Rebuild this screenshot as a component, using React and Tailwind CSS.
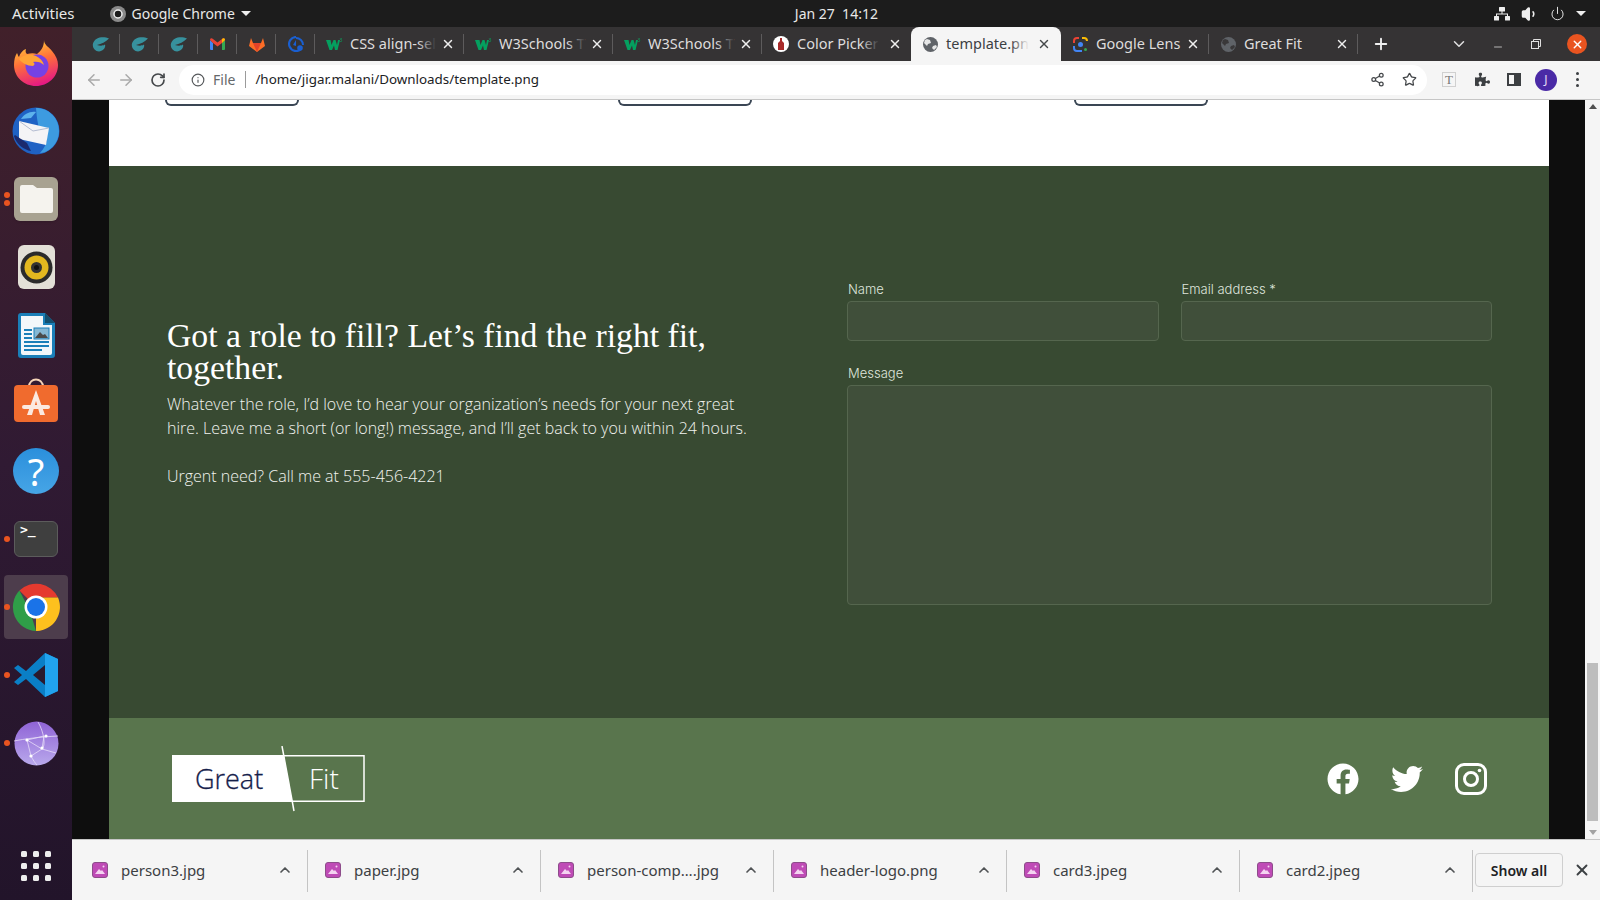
import { ArrowLeft, ArrowRight, RotateCw, Info, Share2, Star, X, ChevronDown, ChevronUp, Plus, Minus, Power, Volume1 } from 'lucide-react';
import { FaFacebook, FaTwitter, FaPuzzlePiece } from 'react-icons/fa';

const uiFont = { fontFamily: '"Noto Sans", sans-serif' };

/* ---------- dock icons ---------- */

const FirefoxIcon = () => (
  <svg width="48" height="48" viewBox="0 0 48 48">
    <defs>
      <linearGradient id="ff" x1="0.3" y1="0" x2="0.6" y2="1">
        <stop offset="0" stopColor="#ffd43a" />
        <stop offset="0.45" stopColor="#ff7139" />
        <stop offset="1" stopColor="#e31587" />
      </linearGradient>
    </defs>
    <path d="M32 1c0 5 5 7 8 11 4 5 6 9 6 14 0 12-10 21-22 21S2 38 2 26c0-5 1-9 3-12 1 2 1 3 2 4 1-4 4-7 7-8-1 3 0 4 1 5 4-1 7-1 10 0 4-3 7-7 7-14z" fill="url(#ff)" />
    <circle cx="25" cy="27" r="11.5" fill="#7542e5" />
    <path d="M7 20c5-5 12-5 17-3 4 2 7 5 8 9-3-3-7-4-11-3 2 1 2 3 0 4-6 0-11-3-14-7z" fill="#ffa436" />
  </svg>
);

const ThunderbirdIcon = () => (
  <svg width="50" height="50" viewBox="0 0 50 50">
    <circle cx="25" cy="25" r="23.5" fill="#1f62c4" />
    <path d="M25 2c13 0 23 10 23 23 0 8-4 15-10 19-3 2-6 3-9 3 4-4 6-9 7-13-8-3-10-20-11-32z" fill="#3d9be0" />
    <path d="M8 15l30 7-3 17-27-6z" fill="#f4f4f6" />
    <path d="M8 15l14 10 16-3" fill="none" stroke="#b4bdd2" strokeWidth="1" />
    <path d="M3 30c2 8 10 14 17 15l-4-8-12-8z" fill="#1b2a6e" />
    <path d="M10 13c3-5 9-8 15-7l-5 6-10 1z" fill="#5db3ec" />
  </svg>
);

const FilesIcon = () => (
  <div className="flex h-[44px] w-[44px] items-center justify-center rounded-md bg-[#a8a291] shadow-sm">
    <svg width="33" height="28" viewBox="0 0 33 28">
      <path d="M2 0h11l4 3h14a2 2 0 0 1 2 2v21a2 2 0 0 1-2 2H2a2 2 0 0 1-2-2V2a2 2 0 0 1 2-2z" fill="#f5f3ee" />
    </svg>
  </div>
);

const RhythmboxIcon = () => (
  <div className="flex h-[44px] w-[37px] items-center justify-center rounded-md bg-[#e3e0d7]">
    <svg width="33" height="33" viewBox="0 0 33 33">
      <circle cx="16.5" cy="16.5" r="16" fill="#2b2b2b" />
      <circle cx="16.5" cy="16.5" r="12" fill="#e3b81f" />
      <circle cx="16.5" cy="16.5" r="5.5" fill="#333" />
      <circle cx="16.5" cy="16.5" r="2.5" fill="#111" />
    </svg>
  </div>
);

const WriterIcon = () => (
  <svg width="37" height="45" viewBox="0 0 37 45">
    <path d="M3 0h24l10 10v32a3 3 0 0 1-3 3H3a3 3 0 0 1-3-3V3a3 3 0 0 1 3-3z" fill="#1a7fb8" />
    <path d="M3 3h22v9h9v28a2 2 0 0 1-2 2H5a2 2 0 0 1-2-2z" fill="#f2f7fa" />
    <path d="M27 0l10 10H27z" fill="#14506f" />
    <g fill="#1a7fb8">
      <rect x="6" y="16" width="8" height="2" />
      <rect x="6" y="20" width="8" height="2" />
      <rect x="6" y="24" width="8" height="2" />
      <rect x="6" y="28" width="25" height="2" />
      <rect x="6" y="32" width="25" height="2" />
      <rect x="6" y="36" width="18" height="2" />
    </g>
    <rect x="16" y="15" width="15" height="11" fill="#86b8d4" stroke="#1a7fb8" />
    <path d="M17 25l5-6 3 3 2-1 3 4z" fill="#4b4b4b" />
  </svg>
);

const SoftwareIcon = () => (
  <svg width="46" height="46" viewBox="0 0 46 46" className="mb-[4px]">
    <path d="M16 9c0-10 14-10 14 0" fill="none" stroke="#f5d4b8" strokeWidth="2" />
    <rect x="1" y="7" width="44" height="37" rx="4" fill="#f06b2e" />
    <path d="M23 12l-9 25h5l4-14 4 14h5z" fill="#fbe9e0" />
    <rect x="9" y="27" width="28" height="4" rx="2" fill="#fbe9e0" />
  </svg>
);

const HelpIcon = () => (
  <div className="flex h-[46px] w-[46px] items-center justify-center rounded-full bg-gradient-to-b from-[#2a8fdc] to-[#46a5e6] text-[38px] leading-none text-white" style={uiFont}>?</div>
);

const TerminalIcon = () => (
  <div className="flex h-[36px] w-[44px] flex-col rounded-md border border-[#5c5c5c] bg-[#3f3f3f] pl-[5px] pt-px text-[13px] font-bold leading-[14px] text-white" style={{ fontFamily: '"DejaVu Sans Mono", monospace' }}>
    &gt;_
  </div>
);

const ChromeIcon = ({ size = 48 }) => (
  <svg width={size} height={size} viewBox="0 0 48 48">
    <path d="M24 24L7.4 7.6A24 24 0 0 1 46 14.5H24z" fill="#e53a2f" />
    <path d="M24 24H46A24 24 0 0 1 24 48z" fill="#fdc01e" />
    <path d="M24 48A24 24 0 0 1 7.4 7.6L18 28z" fill="#2f9e48" />
    <path d="M24 14.5h22a24 24 0 0 1-22 33.5l10-18z" fill="#fdc01e" />
    <circle cx="24" cy="24" r="11.5" fill="#fff" />
    <circle cx="24" cy="24" r="9" fill="#1a73e8" />
  </svg>
);

const VSCodeIcon = () => (
  <svg width="44" height="44" viewBox="0 0 44 44">
    <path d="M31 0l13 6v32l-13 6L12 26l-8 6-4-3 8-7-8-7 4-3 8 6z" fill="#0a7fc6" />
    <path d="M31 0l13 6v32l-13 6z" fill="#21a3ee" />
    <path d="M31 12L19 22l12 10z" fill="#2a1a2e" />
  </svg>
);

const GlobeIcon = () => (
  <svg width="45" height="45" viewBox="0 0 45 45">
    <defs>
      <linearGradient id="gl" x1="0" y1="0" x2="0" y2="1">
        <stop offset="0" stopColor="#8f63d6" />
        <stop offset="1" stopColor="#b9a9ec" />
      </linearGradient>
    </defs>
    <circle cx="22.5" cy="22.5" r="22" fill="url(#gl)" />
    <g fill="none" stroke="#e6dcf8" strokeWidth="0.8">
      <path d="M0 20c10-2 25-4 44-5M13 19l17-4M13 19l15 9M28 28l-11 7M28 28l14 4M13 19l4 16M30 15l-2 13M17 35c2 4 4 7 6 9M24 1c6 10 8 24 4 27" />
    </g>
    <g fill="#fff">
      <circle cx="13" cy="19" r="1.6" />
      <circle cx="32" cy="15" r="1.6" />
      <circle cx="28" cy="27" r="1.6" />
      <circle cx="17" cy="35" r="1.6" />
    </g>
  </svg>
);

/* ---------- tab favicons ---------- */

const SwirlIcon = () => (
  <svg width="17" height="15" viewBox="0 0 17 15">
    <path d="M17 1.500C12-1 3-.5 1 6.500c-1 4 2 8 6 8 4-.5 7-3.500 6-7-2 1.500-5 1.500-8 .5 4-1 9-3 12-6.500z" fill="#37919d" />
  </svg>
);
const GmailIcon = () => (
  <svg width="15" height="12" viewBox="0 0 15 12">
    <path d="M0 2v9a1 1 0 0 0 1 1h2V5z" fill="#4285f4" />
    <path d="M15 2v9a1 1 0 0 1-1 1h-2V5z" fill="#34a853" />
    <path d="M0 2c0-2 2-2 3-1l4.500 3.500L12 1c1-1 3-1 3 1l-3 3-4.500 3.500L3 5z" fill="#ea4335" />
    <path d="M12 1c1-1 3-1 3 1l-3 3z" fill="#fbbc04" />
  </svg>
);
const GitlabIcon = () => (
  <svg width="16" height="15" viewBox="0 0 16 15">
    <path d="M8 15L0 9l2-8 2 5h8l2-5 2 8z" fill="#fc6d26" />
    <path d="M8 15L4 6h8z" fill="#e24329" />
  </svg>
);
const BlueIcon = () => (
  <svg width="16" height="16" viewBox="0 0 16 16">
    <path d="M8 1a7 7 0 1 0 5 12" fill="none" stroke="#1a5fd0" strokeWidth="2.200" />
    <path d="M8 2a7 7 0 0 1 7 7" fill="none" stroke="#1a5fd0" strokeWidth="2" />
    <circle cx="12" cy="12" r="2.800" fill="#1a5fd0" />
    <path d="M8 4L5 9l3 1z" fill="#1a5fd0" />
  </svg>
);
const W3Icon = () => (
  <svg width="17" height="13" viewBox="0 0 17 13">
    <path d="M0 2h4.500l1 5 2-5h2l1.500 5 1-5H14l-2.500 10H9L8 7.500 6 12H3.500z" fill="#04a05f" />
    <text x="13.500" y="4" fontSize="5" fill="#04a05f" style={uiFont}>3</text>
  </svg>
);
const PickerIcon = () => (
  <svg width="16" height="16" viewBox="0 0 16 16">
    <circle cx="8" cy="8" r="8" fill="#fff" />
    <path d="M7 2h2v3l2 2v7H5V7l2-2z" fill="#a82a2a" />
  </svg>
);
const WebIcon = ({ color, land }) => (
  <svg width="15" height="15" viewBox="0 0 15 15">
    <circle cx="7.500" cy="7.500" r="7.500" fill={color} />
    <path d="M4 2l3 1 1 3-3 1-1 2-2-2-1-1 1-3zM10 9l3-1 1 2-3 3-2-2z" fill={land} opacity="0.9" />
  </svg>
);
const LensIcon = () => (
  <svg width="15" height="15" viewBox="0 0 15 15" fill="none" strokeWidth="2">
    <path d="M1 6V4a3 3 0 0 1 3-3h2" stroke="#ea4335" />
    <path d="M9 1h2a3 3 0 0 1 3 3" stroke="#fbbc04" />
    <path d="M1 9v2a3 3 0 0 0 3 3h5" stroke="#4285f4" />
    <circle cx="7.500" cy="7.500" r="2.500" fill="#4285f4" stroke="none" />
    <circle cx="12.500" cy="12.500" r="1.500" fill="#34a853" stroke="none" />
  </svg>
);

const ImageFileIcon = () => (
  <svg width="16" height="16" viewBox="0 0 16 16">
    <rect x="0.500" y="0.500" width="15" height="15" rx="2.500" fill="#bf4bb6" stroke="#8d4d8a" />
    <path d="M3 12l4-5 2 2 1-1 3 4z" fill="#f4d4f1" />
    <circle cx="11.500" cy="4.500" r="1" fill="#f4d4f1" />
  </svg>
);

/* ---------- chrome pieces ---------- */

const IconTab = ({ children }) => (
  <div className="relative flex h-[34px] w-[39px] shrink-0 items-center justify-center">
    {children}
    <span className="absolute right-0 top-[7px] h-[20px] w-px bg-[#5d5b5c]" />
  </div>
);

const Tab = ({ icon, title, width = 'w-[149px]', sep = true, fade = true }) => (
  <div className={`relative flex h-[34px] shrink-0 items-center pl-[10px] text-[14.500px] text-[#dedcdc] ${width}`}>
    <span className="flex w-[18px] shrink-0 justify-center">{icon}</span>
    <span className="relative ml-[7px] whitespace-nowrap">
      {title}
      {fade && <span className="absolute inset-y-0 right-0 w-[18px] bg-gradient-to-r from-transparent to-[#353334]" />}
    </span>
    <X size={14} strokeWidth={2.5} className="absolute right-[9px] top-[10px] text-[#eeeeee]" />
    {sep && <span className="absolute right-0 top-[7px] h-[20px] w-px bg-[#5d5b5c]" />}
  </div>
);

const DockSlot = ({ children, dots = 0, active = false }) => (
  <div className="relative flex h-[68px] w-full shrink-0 items-center justify-center">
    <div className={`flex h-[64px] w-[64px] items-center justify-center rounded ${active ? 'bg-[#4d3d4c]' : ''}`}>{children}</div>
    {dots > 0 && (
      <div className="absolute left-[4px] top-0 flex h-full flex-col justify-center gap-[2px]">
        {Array.from({ length: dots }).map((_, i) => (
          <span key={i} className="h-[6px] w-[6px] rounded-full bg-[#e95420]" />
        ))}
      </div>
    )}
  </div>
);

const Download = ({ name }) => (
  <div className="relative flex h-full w-[233px] shrink-0 items-center pl-[17px] text-[15px] text-[#3c4043]">
    <ImageFileIcon />
    <span className="ml-[13px] whitespace-nowrap">{name}</span>
    <ChevronUp size={16} strokeWidth={2.5} className="absolute right-[15px] top-[22px] text-[#505355]" />
    <span className="absolute bottom-[8px] right-0 top-[10px] w-px bg-[#c4c4c4]" />
  </div>
);

const Field = ({ label, children, className = '' }) => (
  <div className={className}>
    <label className="block h-[20px] pl-px text-[13px] font-light leading-[16px] text-[#dfe5dc]" style={{ fontFamily: 'Inter, sans-serif' }}>{label}</label>
    {children}
  </div>
);

const GreatFitLogo = () => (
  <svg width="197" height="66" viewBox="0 0 197 66">
    <path d="M114 9.750H194V55.250H122" fill="none" stroke="#fff" strokeWidth="1.500" />
    <path d="M2 9h111.700l8.600 47H2z" fill="#fff" />
    <path d="M112 0l12 65" stroke="#fff" strokeWidth="1.500" />
    <text x="25" y="43" fontSize="27" fill="#14204a" style={{ fontFamily: '"Open Sans", sans-serif', fontWeight: 300, stroke: '#14204a', strokeWidth: 0.3 }}>Great</text>
    <text x="139" y="43" fontSize="28" fontWeight="300" fill="#fff" style={{ fontFamily: '"Open Sans", sans-serif' }}>Fit</text>
  </svg>
);

const InstagramIcon = () => (
  <svg width="32" height="32" viewBox="0 0 32 32" fill="none" stroke="#fff" strokeWidth="3">
    <rect x="1.500" y="1.500" width="29" height="29" rx="7.500" />
    <circle cx="16" cy="16" r="6.500" />
    <circle cx="24.500" cy="7.500" r="1.800" fill="#fff" stroke="none" />
  </svg>
);

export default function App() {
  return (
    <div className="flex h-[900px] w-[1600px] flex-col overflow-hidden bg-[#0e0e0e]" style={uiFont}>
      {/* Ubuntu top bar */}
      <div className="relative flex h-[27px] shrink-0 items-center bg-[#1c1c1c] pl-[12px] text-[14px] text-[#e8e8e8]">
        <span className="text-[15px]">Activities</span>
        <div className="ml-[35px] flex items-center">
          <svg width="16" height="16" viewBox="0 0 16 16">
            <circle cx="8" cy="8" r="8" fill="#8a8a8a" />
            <circle cx="8" cy="8" r="4" fill="#1c1c1c" stroke="#eee" strokeWidth="1.500" />
          </svg>
          <span className="ml-[6px]">Google Chrome</span>
          <span className="ml-[6px] h-0 w-0 border-x-[5px] border-t-[5px] border-x-transparent border-t-[#eeeeee]" />
        </div>
        <span className="ml-[544px] whitespace-pre text-[14px]">Jan 27  14:12</span>
        <div className="ml-auto flex items-center gap-[11px] pr-[14px]">
          <svg width="16" height="14" viewBox="0 0 16 14" fill="#eeeeee">
            <rect x="5" y="0" width="6" height="4.500" rx="0.500" />
            <rect x="0" y="9" width="5" height="4.500" rx="0.500" />
            <rect x="11" y="9" width="5" height="4.500" rx="0.500" />
            <path d="M7.500 4h1v2.500h5.500V9h-1V7.500H3V9H2V6.500h5.500z" />
          </svg>
          <Volume1 size={18} className="text-[#eeeeee]" fill="#eeeeee" />
          <Power size={15} strokeWidth={1.500} className="text-[#eeeeee]" />
          <span className="h-0 w-0 border-x-[5px] border-t-[5px] border-x-transparent border-t-[#eeeeee]" />
        </div>
      </div>

      <div className="flex min-h-0 flex-1">
        {/* Dock */}
        <div className="flex w-[72px] shrink-0 flex-col bg-gradient-to-b from-[#41202a] via-[#301a33] to-[#22142a] pt-[2px]">
          <DockSlot><FirefoxIcon /></DockSlot>
          <DockSlot><ThunderbirdIcon /></DockSlot>
          <DockSlot dots={2}><FilesIcon /></DockSlot>
          <DockSlot><RhythmboxIcon /></DockSlot>
          <DockSlot><WriterIcon /></DockSlot>
          <DockSlot><SoftwareIcon /></DockSlot>
          <DockSlot><HelpIcon /></DockSlot>
          <DockSlot dots={1}><TerminalIcon /></DockSlot>
          <DockSlot dots={1} active><ChromeIcon /></DockSlot>
          <DockSlot dots={1}><VSCodeIcon /></DockSlot>
          <DockSlot dots={1}><GlobeIcon /></DockSlot>
          <div className="mb-[19px] mt-auto grid w-[30px] grid-cols-3 gap-[6px] self-center">
            {Array.from({ length: 9 }).map((_, i) => (
              <span key={i} className="h-[6px] w-[6px] rounded-[1.500px] bg-[#eeeeee]" />
            ))}
          </div>
        </div>

        <div className="flex min-w-0 flex-1 flex-col">
          {/* Tab strip */}
          <div className="flex h-[34px] shrink-0 items-center bg-[#353334] pl-[9px]">
            <IconTab><SwirlIcon /></IconTab>
            <IconTab><SwirlIcon /></IconTab>
            <IconTab><SwirlIcon /></IconTab>
            <IconTab><GmailIcon /></IconTab>
            <IconTab><GitlabIcon /></IconTab>
            <IconTab><BlueIcon /></IconTab>
            <Tab icon={<W3Icon />} title="CSS align-sel" />
            <Tab icon={<W3Icon />} title="W3Schools T" />
            <Tab icon={<W3Icon />} title="W3Schools T" />
            <Tab icon={<PickerIcon />} title="Color Picker" sep={false} />
            <div className="relative flex h-[34px] w-[150px] shrink-0 items-center rounded-t-lg bg-[#f5f5f5] pl-[10px] text-[14.500px] text-[#3c4043]">
              <span className="flex w-[18px] shrink-0 justify-center"><WebIcon color="#5f6368" land="#f5f5f5" /></span>
              <span className="relative ml-[7px] whitespace-nowrap">
                template.pn
                <span className="absolute inset-y-0 right-0 w-[18px] bg-gradient-to-r from-transparent to-[#f5f5f5]" />
              </span>
              <X size={14} strokeWidth={2.5} className="absolute right-[10px] top-[10px] text-[#45484a]" />
            </div>
            <Tab icon={<LensIcon />} title="Google Lens" width="w-[148px]" fade={false} />
            <Tab icon={<WebIcon color="#5f6368" land="#353334" />} title="Great Fit" fade={false} />
            <Plus size={18} strokeWidth={2.5} className="ml-[14px] text-[#f0f0f0]" />
            <ChevronDown size={18} strokeWidth={2} className="ml-[60px] text-[#e0e0e0]" />
            <Minus size={12} strokeWidth={1.500} className="ml-[24px] mt-[6px] text-[#e0e0e0]" />
            <svg width="10" height="10" viewBox="0 0 10 10" fill="none" stroke="#e0e0e0" className="ml-[27px]">
              <rect x="0.500" y="2.500" width="7" height="7" />
              <path d="M2.500 2.500v-2h7v7h-2" />
            </svg>
            <div className="ml-[26px] flex h-[20px] w-[20px] items-center justify-center rounded-full bg-[#e95420]">
              <X size={13} strokeWidth={2.5} className="text-white" />
            </div>
          </div>

          {/* Toolbar */}
          <div className="flex h-[39px] shrink-0 items-center border-b border-[#c6c6c6] bg-[#f5f5f5] pb-px">
            <ArrowLeft size={18} className="ml-[13px] text-[#a9a9a9]" />
            <ArrowRight size={18} className="ml-[14px] text-[#a9a9a9]" />
            <RotateCw size={16} strokeWidth={2.5} className="ml-[15px] text-[#44474a]" />
            <div className="ml-[13px] flex h-[30px] w-[1248px] items-center rounded-full bg-white pl-[12px] text-[14px] text-[#202124]">
              <Info size={14} className="text-[#55585b]" />
              <span className="ml-[8px] text-[#65686b]">File</span>
              <span className="ml-[10px] h-[17px] w-px bg-[#9b9b9b]" />
              <span className="ml-[9px] whitespace-nowrap text-[13.400px]">/home/jigar.malani/Downloads/template.png</span>
              <Share2 size={15} className="ml-auto text-[#44474a]" />
              <Star size={15} strokeWidth={2} className="ml-[17px] mr-[10px] text-[#44474a]" />
            </div>
            <div className="ml-[15px] flex h-[15px] w-[14px] items-center justify-center border border-[#d0d0d0] text-[13px] leading-none text-[#777]" style={{ fontFamily: '"Liberation Serif", serif' }}>T</div>
            <FaPuzzlePiece size={15} className="ml-[19px] text-[#3c3f42]" />
            <div className="ml-[17px] flex h-[13px] w-[14px] justify-end border-2 border-[#3c3f42]"><span className="w-[5px] bg-[#3c3f42]" /></div>
            <div className="ml-[14px] flex h-[22px] w-[22px] items-center justify-center rounded-full bg-[#4a2aa6] text-[12px] text-[#e6dcf8]">J</div>
            <div className="ml-[19px] flex flex-col gap-[3px]">
              <span className="h-[3px] w-[3px] rounded-full bg-[#3c3f42]" />
              <span className="h-[3px] w-[3px] rounded-full bg-[#3c3f42]" />
              <span className="h-[3px] w-[3px] rounded-full bg-[#3c3f42]" />
            </div>
          </div>

          {/* Viewport */}
          <div className="flex min-h-0 flex-1 bg-[#0e0e0e] pl-[37px]">
            <div className="flex w-[1440px] shrink-0 flex-col">
              {/* tail of the cards above */}
              <div className="flex h-[66px] shrink-0 bg-white pl-[56px]">
                <div className="w-[453px]"><div className="h-[6px] w-[134px] rounded-b-lg border-x-2 border-b-2 border-[#3a4654]" /></div>
                <div className="w-[456px]"><div className="h-[6px] w-[134px] rounded-b-lg border-x-2 border-b-2 border-[#3a4654]" /></div>
                <div><div className="h-[6px] w-[134px] rounded-b-lg border-x-2 border-b-2 border-[#3a4654]" /></div>
              </div>

              {/* Contact section */}
              <div className="flex h-[552px] shrink-0 bg-[#384a32]">
                <div className="w-[738px] shrink-0 pl-[58px] pt-[154px]">
                  <h2 className="w-[580px] text-[33.700px] leading-[32px] text-white" style={{ fontFamily: '"Liberation Serif", serif' }}>
                    Got a role to fill? Let’s find the right fit, together.
                  </h2>
                  <div className="mt-[8px] w-[600px] text-[16px] font-light leading-[24px] text-[#f2f4f0]" style={{ fontFamily: '"Open Sans", sans-serif' }}>
                    <p>Whatever the role, I’d love to hear your organization’s needs for your next great hire. Leave me a short (or long!) message, and I’ll get back to you within 24 hours.</p>
                    <p className="mt-[24px]">Urgent need? Call me at 555-456-4221</p>
                  </div>
                </div>
                <div className="grid w-[645px] grid-cols-2 content-start gap-x-[22px] gap-y-[24px] pt-[115px]">
                  <Field label="Name">
                    <input className="h-[40px] w-full rounded border border-[#55664e] bg-[#404f3a]" />
                  </Field>
                  <Field label="Email address *">
                    <input className="h-[40px] w-full rounded border border-[#55664e] bg-[#404f3a]" />
                  </Field>
                  <Field label="Message" className="col-span-2">
                    <textarea className="block h-[220px] w-full resize-none rounded border border-[#55664e] bg-[#404f3a]" />
                  </Field>
                </div>
              </div>

              {/* Footer */}
              <div className="flex min-h-0 flex-1 items-center justify-between bg-[#59754d] pl-[61px] pr-[62px]">
                <GreatFitLogo />
                <div className="flex items-center gap-[32px] text-white">
                  <FaFacebook size={32} />
                  <FaTwitter size={32} />
                  <InstagramIcon />
                </div>
              </div>
            </div>

            {/* Scrollbar */}
            <div className="ml-[36px] flex w-[15px] shrink-0 flex-col items-center bg-[#f5f5f5] py-[4px]">
              <span className="h-0 w-0 border-x-[4px] border-b-[5px] border-x-transparent border-b-[#505050]" />
              <span className="mt-[554px] h-[158px] w-[11px] bg-[#bdbdbd]" />
              <span className="mt-auto h-0 w-0 border-x-[4px] border-t-[5px] border-x-transparent border-t-[#a3a3a3]" />
            </div>
          </div>

          {/* Download shelf */}
          <div className="flex h-[61px] shrink-0 items-center border-t border-[#c6c6c6] bg-[#f5f5f5] pl-[3px]">
            <Download name="person3.jpg" />
            <Download name="paper.jpg" />
            <Download name="person-comp….jpg" />
            <Download name="header-logo.png" />
            <Download name="card3.jpeg" />
            <Download name="card2.jpeg" />
            <button className="ml-[2px] h-[34px] w-[88px] rounded border border-[#cfcfcf] text-[14px] font-semibold text-[#202124]">Show all</button>
            <X size={18} strokeWidth={2.5} className="ml-[10px] text-[#3c4043]" />
          </div>
        </div>
      </div>
    </div>
  );
}
